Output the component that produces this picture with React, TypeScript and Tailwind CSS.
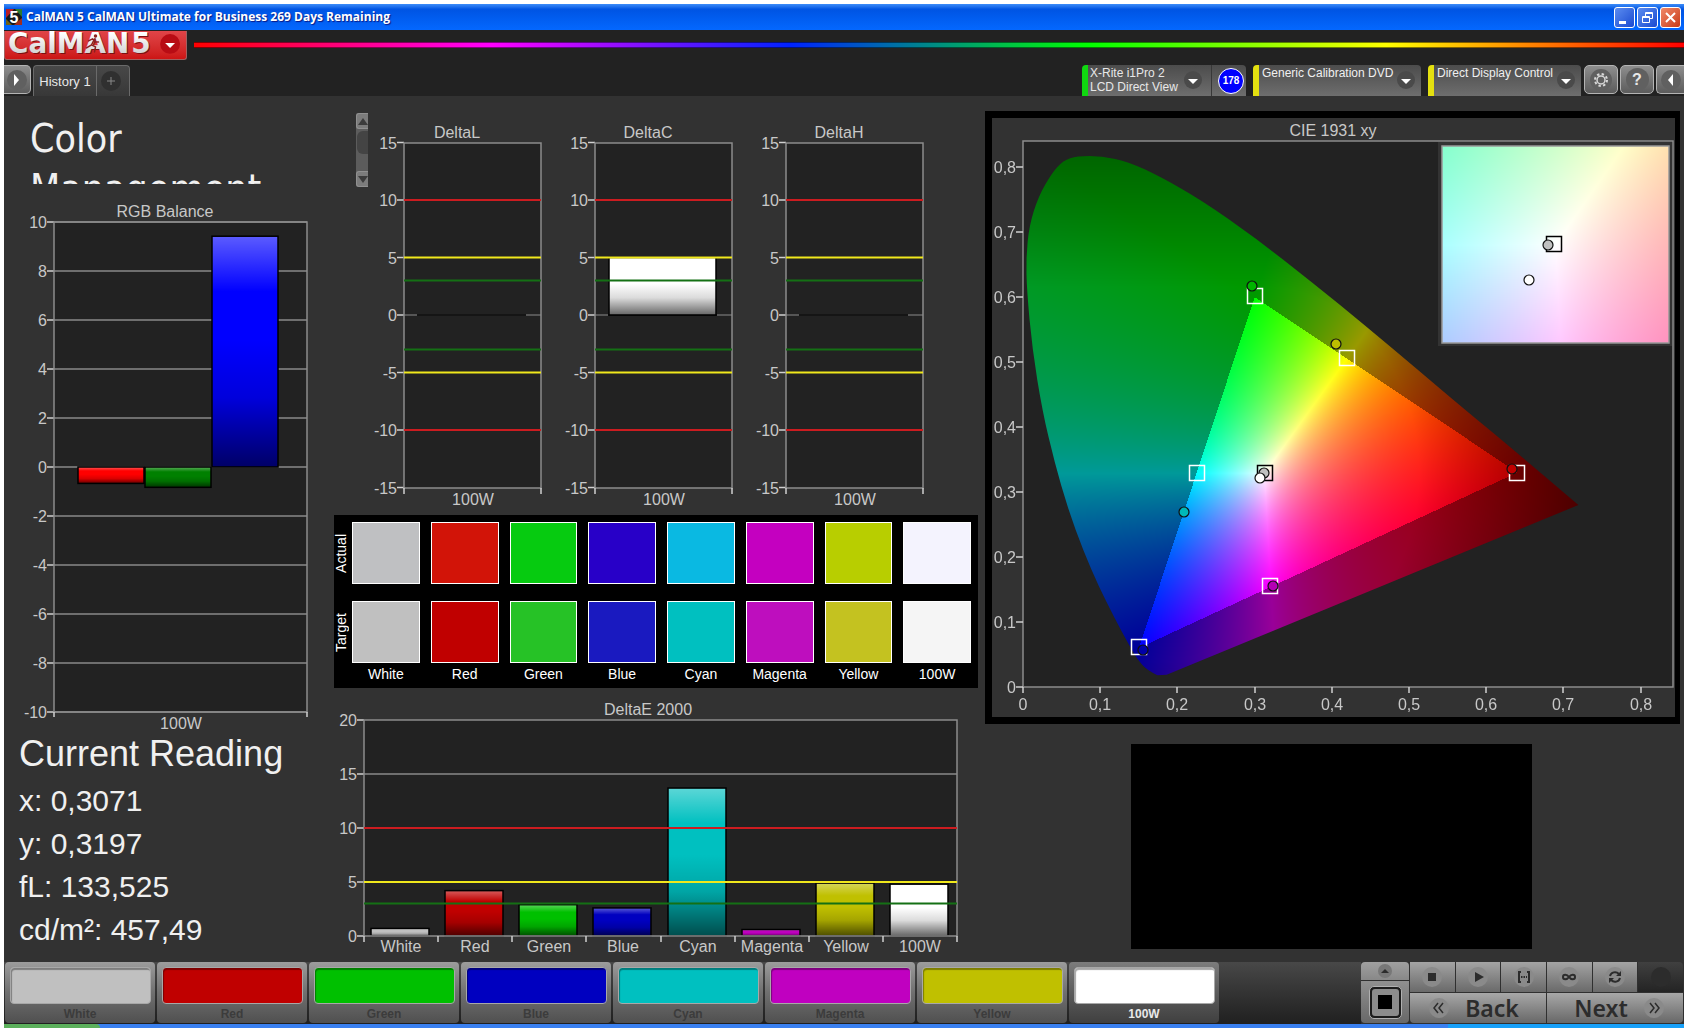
import { useEffect, useRef } from "react";
import type { ReactNode } from "react";

type Bar = { label: string; value: number; color: string };
type Line = { at: number; color: string; width: number };
type Marker = { x: number; y: number; color: string };

const patches = [
  { name: "White", actual: "#bfc0c2", target: "#c0c0c0", button: "#c0c0c0", deltaE: 0.7 },
  { name: "Red", actual: "#d21408", target: "#c00000", button: "#c00000", deltaE: 4.2 },
  { name: "Green", actual: "#06cb10", target: "#26c226", button: "#00c000", deltaE: 2.9 },
  { name: "Blue", actual: "#2800c8", target: "#1a1ac0", button: "#0000c0", deltaE: 2.6 },
  { name: "Cyan", actual: "#0ab9e2", target: "#00c0c0", button: "#00c0c0", deltaE: 13.7 },
  { name: "Magenta", actual: "#c400c0", target: "#be0ebe", button: "#c000c0", deltaE: 0.6 },
  { name: "Yellow", actual: "#b8ce00", target: "#c4c220", button: "#c0c000", deltaE: 4.9 },
  { name: "100W", actual: "#f4f3fe", target: "#f5f5f5", button: "#ffffff", deltaE: 4.8 },
];

const readings = ["x: 0,3071", "y: 0,3197", "fL: 133,525", "cd/m²: 457,49"];

const deltaLimits: Line[] = [
  { at: 10, color: "#cc1c20", width: 2 },
  { at: 5, color: "#f0e81c", width: 2 },
  { at: 3, color: "#147014", width: 2 },
  { at: -3, color: "#147014", width: 2 },
  { at: -5, color: "#f0e81c", width: 2 },
  { at: -10, color: "#cc1c20", width: 2 },
];

const balance = [
  { value: -0.67, color: "#ff0000" },
  { value: -0.83, color: "#008000" },
  { value: 9.42, color: "#0000ff" },
];

const targets: Marker[] = [
  { x: 0.3, y: 0.601, color: "#fff" },
  { x: 0.42, y: 0.506, color: "#fff" },
  { x: 0.64, y: 0.33, color: "#fff" },
  { x: 0.225, y: 0.33, color: "#fff" },
  { x: 0.32, y: 0.155, color: "#fff" },
  { x: 0.15, y: 0.062, color: "#fff" },
  { x: 0.314, y: 0.33, color: "#000" },
];

const measured: Marker[] = [
  { x: 0.297, y: 0.617, color: "#00b400" },
  { x: 0.405, y: 0.528, color: "#bebe00" },
  { x: 0.633, y: 0.335, color: "#c00000" },
  { x: 0.208, y: 0.27, color: "#00b8b8" },
  { x: 0.324, y: 0.155, color: "#b400b4" },
  { x: 0.156, y: 0.057, color: "#0000a8" },
  { x: 0.312, y: 0.33, color: "#c0c0c0" },
  { x: 0.307, y: 0.321, color: "#ffffff" },
];

const locus = [
  [0.174, 0.018], [0.16, 0.026], [0.148, 0.043], [0.137, 0.065], [0.118, 0.107],
  [0.098, 0.155], [0.078, 0.21], [0.058, 0.275], [0.041, 0.345], [0.025, 0.425],
  [0.012, 0.52], [0.005, 0.61], [0.004, 0.66], [0.008, 0.71], [0.02, 0.755],
  [0.037, 0.79], [0.052, 0.81], [0.07, 0.817], [0.102, 0.817], [0.137, 0.808],
  [0.178, 0.785], [0.23, 0.75], [0.301, 0.691], [0.373, 0.624], [0.444, 0.555],
  [0.512, 0.487], [0.575, 0.424], [0.627, 0.373], [0.719, 0.28],
];

// linear sRGB for a chromaticity, scaled so the largest channel is full on
function chromaToRgb(x: number, y: number) {
  const X = x / y;
  const Z = (1 - x - y) / y;
  const rgb = [
    3.2406 * X - 1.5372 - 0.4986 * Z,
    -0.9689 * X + 1.8758 + 0.0415 * Z,
    0.0557 * X - 0.204 + 1.057 * Z,
  ];
  const max = Math.max(...rgb);
  const inside = Math.min(...rgb) >= 0;
  return { rgb: rgb.map((c) => Math.max(0, c / max)), inside };
}

function paintChroma(
  canvas: HTMLCanvasElement,
  range: { x0: number; x1: number; y0: number; y1: number },
  shaded: boolean,
) {
  const ctx = canvas.getContext("2d");
  if (!ctx) return;
  const { width, height } = canvas;
  const image = ctx.createImageData(width, height);
  for (let j = 0; j < height; j++) {
    for (let i = 0; i < width; i++) {
      const x = range.x0 + ((i + 0.5) / width) * (range.x1 - range.x0);
      const y = range.y1 - ((j + 0.5) / height) * (range.y1 - range.y0);
      const { rgb, inside } = chromaToRgb(x, y);
      let level = 255;
      if (shaded) {
        const d = Math.hypot(Math.max(0, x - 0.3127), (y - 0.329) * 0.7);
        level *= Math.min(1, 1 - 2.4 * (d - 0.2));
        if (!inside) level *= 0.6;
      }
      const k = (j * width + i) * 4;
      image.data[k] = rgb[0] * level;
      image.data[k + 1] = rgb[1] * level;
      image.data[k + 2] = rgb[2] * level;
      image.data[k + 3] = 255;
    }
  }
  ctx.putImageData(image, 0, 0);
  if (!shaded) return;

  // keep only what lies inside the spectral locus
  const px = (p: number[]) => [
    ((p[0] - range.x0) / (range.x1 - range.x0)) * width,
    ((range.y1 - p[1]) / (range.y1 - range.y0)) * height,
  ];
  const pts = locus.map(px);
  ctx.globalCompositeOperation = "destination-in";
  ctx.beginPath();
  ctx.moveTo(pts[0][0], pts[0][1]);
  for (let n = 1; n < pts.length - 1; n++) {
    const [cx, cy] = pts[n];
    const [nx, ny] = pts[n + 1];
    ctx.quadraticCurveTo(cx, cy, (cx + nx) / 2, (cy + ny) / 2);
  }
  const last = pts[pts.length - 1];
  ctx.lineTo(last[0], last[1]);
  const [ex, ey] = px([0.186, 0.019]);
  ctx.lineTo(ex, ey);
  ctx.closePath();
  ctx.fill();
}

function Gloss() {
  return (
    <defs>
      <linearGradient id="gloss" x1="0" y1="0" x2="0" y2="1">
        <stop offset="0" stopColor="#fff" stopOpacity="0.36" />
        <stop offset="0.24" stopColor="#fff" stopOpacity="0" />
        <stop offset="0.45" stopColor="#000" stopOpacity="0" />
        <stop offset="0.7" stopColor="#000" stopOpacity="0.14" />
        <stop offset="1" stopColor="#000" stopOpacity="0.6" />
      </linearGradient>
    </defs>
  );
}

function GlossBar({ x, y, w, h, color }: { x: number; y: number; w: number; h: number; color: string }) {
  return (
    <>
      <rect x={x} y={y} width={w} height={h} fill={color} />
      <rect x={x} y={y} width={w} height={h} fill="url(#gloss)" stroke="#000" strokeWidth="1.5" />
    </>
  );
}

function Tick({ x, y, label }: { x: number; y: number; label: string }) {
  return (
    <>
      <path d={`M${x - 7} ${y}H${x}`} stroke="#d0d0d0" strokeWidth="1.5" />
      <text x={x - 7} y={y + 6} textAnchor="end">{label}</text>
    </>
  );
}

const chartText = "block w-full h-auto fill-[#c8c8c8] font-['Liberation_Sans',Arial,sans-serif] text-[16px]";

function RgbBalance() {
  const yOf = (v: number) => 271 - v * 24.5;
  return (
    <svg viewBox="0 0 326 538" className={chartText} role="img" aria-label="RGB Balance">
      <Gloss />
      <text x="161" y="21" textAnchor="middle">RGB Balance</text>
      <rect x="50" y="26" width="253" height="490" fill="#222" />
      {[10, 8, 6, 4, 2, 0, -2, -4, -6, -8, -10].map((v) => (
        <g key={v}>
          <path d={`M50 ${yOf(v)}H303`} stroke="#8a8a8a" strokeWidth="1.5" />
          <Tick x={50} y={yOf(v)} label={String(v)} />
        </g>
      ))}
      {balance.map((b, i) => (
        <GlossBar key={b.color} x={74 + i * 67} y={Math.min(271, yOf(b.value))} w={66} h={Math.abs(b.value) * 24.5} color={b.color} />
      ))}
      <rect x="50" y="26" width="253" height="490" fill="none" stroke="#8c8c8c" strokeWidth="1.5" />
      <path d="M50 516v5M303 516v5" stroke="#d0d0d0" strokeWidth="1.5" />
      <text x="177" y="533" textAnchor="middle">100W</text>
    </svg>
  );
}

function DeltaChart({ title, value }: { title: string; value: number }) {
  const yOf = (v: number) => 202 - v * 11.5;
  return (
    <svg viewBox="0 0 191 397" className={chartText} role="img" aria-label={title}>
      <Gloss />
      <text x="89" y="25" textAnchor="middle">{title}</text>
      <rect x="36" y="30" width="137" height="345" fill="#222" />
      {[15, 10, 5, 0, -5, -10, -15].map((v) => (
        <Tick key={v} x={36} y={yOf(v)} label={String(v)} />
      ))}
      <path d="M36 202H173" stroke="#8a8a8a" />
      <path d="M49 202H158" stroke="#000" strokeWidth="1.5" />
      {value > 0 && <GlossBar x={50} y={yOf(value)} w={107} h={value * 11.5} color="#fff" />}
      <rect x="36" y="30" width="137" height="345" fill="none" stroke="#8c8c8c" strokeWidth="1.5" />
      {deltaLimits.map((l) => (
        <path key={l.at} d={`M36 ${yOf(l.at)}H173`} stroke={l.color} strokeWidth={l.width} />
      ))}
      <path d="M36 375v6M173 375v6" stroke="#d0d0d0" strokeWidth="1.5" />
      <text x="105" y="392" textAnchor="middle">100W</text>
    </svg>
  );
}

function DeltaEChart({ bars }: { bars: Bar[] }) {
  const yOf = (v: number) => 240 - v * 10.8;
  const step = 593 / bars.length;
  return (
    <svg viewBox="0 0 650 262" className={chartText} role="img" aria-label="DeltaE 2000">
      <Gloss />
      <text x="318" y="19" textAnchor="middle">DeltaE 2000</text>
      <rect x="34" y="24" width="593" height="216" fill="#222" />
      <path d={`M34 ${yOf(15)}H627`} stroke="#8a8a8a" strokeWidth="1.5" />
      {[20, 15, 10, 5, 0].map((v) => (
        <Tick key={v} x={34} y={yOf(v)} label={String(v)} />
      ))}
      {bars.map((b, i) => (
        <g key={b.label}>
          <GlossBar x={Math.round(41 + i * step)} y={yOf(b.value)} w={58} h={b.value * 10.8} color={b.color} />
          <text x={Math.round(34 + (i + 0.5) * step)} y="256" textAnchor="middle">{b.label}</text>
        </g>
      ))}
      <rect x="34" y="24" width="593" height="216" fill="none" stroke="#8c8c8c" strokeWidth="1.5" />
      {bars.concat(bars[0]).map((_, i) => (
        <path key={i} d={`M${Math.round(34 + i * step)} 240v6`} stroke="#d0d0d0" strokeWidth="1.5" />
      ))}
      <path d={`M34 ${yOf(10)}H627`} stroke="#cc1c20" strokeWidth="2" />
      <path d={`M34 ${yOf(5)}H627`} stroke="#f0e81c" strokeWidth="2" />
      <path d={`M34 ${yOf(3)}H627`} stroke="#147014" strokeWidth="2" />
    </svg>
  );
}

function CieChart() {
  const main = useRef<HTMLCanvasElement>(null);
  const inset = useRef<HTMLCanvasElement>(null);

  useEffect(() => {
    if (main.current) paintChroma(main.current, { x0: 0, x1: 0.8415, y0: 0, y1: 0.84 }, true);
    if (inset.current) paintChroma(inset.current, { x0: 0.2877, x1: 0.3377, y0: 0.304, y1: 0.354 }, false);
  }, []);

  const xOf = (x: number) => Math.round(31 + x * 772);
  const yOf = (y: number) => Math.round(569 - y * 650);
  const steps = [0, 1, 2, 3, 4, 5, 6, 7, 8];
  const label = (n: number) => (n === 0 ? "0" : `0,${n}`);

  return (
    <svg viewBox="0 0 683 599" className={chartText} role="img" aria-label="CIE 1931 xy">
      <text x="341" y="18" textAnchor="middle">CIE 1931 xy</text>
      <rect x="31" y="23" width="650" height="546" fill="#222" />
      <foreignObject x="31" y="23" width="650" height="546">
        <canvas ref={main} width={650} height={546} className="block" />
      </foreignObject>
      <rect x="31" y="23" width="650" height="546" fill="none" stroke="#8c8c8c" strokeWidth="1.5" />
      {steps.map((n) => (
        <g key={n}>
          <Tick x={31} y={yOf(n / 10)} label={label(n)} />
          <path d={`M${xOf(n / 10)} 569v6`} stroke="#d0d0d0" strokeWidth="1.5" />
          <text x={xOf(n / 10)} y="592" textAnchor="middle">{label(n)}</text>
        </g>
      ))}
      {targets.map((m) => (
        <rect key={m.x} x={xOf(m.x) - 7.5} y={yOf(m.y) - 7.5} width="15" height="15" fill="none" stroke={m.color} strokeWidth="1.5" />
      ))}
      {measured.map((m) => (
        <circle key={m.x} cx={xOf(m.x)} cy={yOf(m.y)} r="5" fill={m.color} stroke="#111" strokeWidth="1.2" />
      ))}

      {/* zoom on the white point */}
      <rect x="446" y="24" width="234" height="204" fill="#333" />
      <foreignObject x="450" y="28" width="227" height="197">
        <canvas ref={inset} width={227} height={197} className="block" />
      </foreignObject>
      <rect x="450" y="28" width="227" height="197" fill="none" stroke="#999" strokeWidth="1.5" />
      <rect x="554.5" y="118.5" width="15" height="15" fill="none" stroke="#000" strokeWidth="1.5" />
      <circle cx="556" cy="127" r="5" fill="#c0c0c0" stroke="#111" strokeWidth="1.2" />
      <circle cx="537" cy="162" r="5" fill="#fff" stroke="#111" strokeWidth="1.2" />
    </svg>
  );
}

function SwatchTable() {
  const rowHead = "[writing-mode:vertical-rl] rotate-180 mx-auto text-[14px] leading-[14px] font-normal";
  return (
    <table className="w-full table-fixed border-collapse bg-black text-white">
      <colgroup>
        <col className="w-[14px]" />
        {patches.map((p) => <col key={p.name} />)}
      </colgroup>
      <tbody>
        <tr>
          <th scope="row" className="p-0 pt-[7px]"><div className={rowHead}>Actual</div></th>
          {patches.map((p) => (
            <td key={p.name} className="p-0 pt-[7px] pl-1 pr-[7px]">
              <div className="h-[62px] border border-white" style={{ backgroundColor: p.actual }} />
            </td>
          ))}
        </tr>
        <tr>
          <th scope="row" className="p-0 pt-[17px]"><div className={rowHead}>Target</div></th>
          {patches.map((p) => (
            <td key={p.name} className="p-0 pt-[17px] pl-1 pr-[7px]">
              <div className="h-[62px] border border-white" style={{ backgroundColor: p.target }} />
            </td>
          ))}
        </tr>
        <tr>
          <td />
          {patches.map((p) => (
            <td key={p.name} className="h-[25px] p-0 pl-1 pr-[7px] pb-1 text-center text-[14px] leading-[16px]">{p.name}</td>
          ))}
        </tr>
      </tbody>
    </table>
  );
}

function RoundDown({ className = "" }: { className?: string }) {
  return (
    <svg viewBox="0 0 20 20" className={`pointer-events-none size-5 shrink-0 ${className}`} aria-hidden="true">
      <circle cx="10" cy="10" r="9" fill="#4a4a4a" />
      <path d="M5 9h10l-5 5z" fill="#fff" />
    </svg>
  );
}

function SourceSelect({ label, option, width }: { label: string; option: string; width: string }) {
  return (
    <div className={`relative flex h-[31px] rounded-t-[4px] border-l-[6px] border-[#e4e010] bg-linear-to-b from-[#4c4c4c] to-[#6e6e6e] ${width}`}>
      <select aria-label={label} className="h-full w-full appearance-none bg-transparent pb-4 pl-[3px] text-[12px] leading-[14px] text-[#f0f0f0] outline-none">
        <option>{option}</option>
      </select>
      <RoundDown className="absolute right-[5px] top-[5px]" />
    </div>
  );
}

const toolButton =
  "flex h-[29px] items-center justify-center rounded-[5px] border border-[#b4b4b4] bg-linear-to-b from-[#8e8e8e] to-[#5c5c5c]";

function TitleBar() {
  const box = "flex size-[21px] items-center justify-center rounded-[3px] border border-white";
  return (
    <header className="flex h-[26px] items-center gap-1 bg-linear-to-b from-[#3c8cf8] via-[#0054e3] via-20% to-[#0468ff] pl-[2px] pr-[3px]">
      <svg viewBox="0 0 16 16" className="size-4" aria-hidden="true">
        <rect width="16" height="16" fill="#181818" />
        <path d="M0 0h8L0 9z" fill="#b81c24" />
        <path d="M9 0h7v8z" fill="#2c7a30" />
        <path d="M16 9v7H8z" fill="#a02c20" />
        <path d="M0 10v6h6z" fill="#706018" />
        <text x="8" y="14" textAnchor="middle" className="fill-white font-['Liberation_Sans',Arial,sans-serif] text-[16px] font-bold">5</text>
      </svg>
      <h1 className="grow font-['Open_Sans','Noto_Sans',sans-serif] text-[12px] font-bold text-white [text-shadow:1px_1px_1px_#0a1883]">
        CalMAN 5 CalMAN Ultimate for Business 269 Days Remaining
      </h1>
      <div className="flex gap-[2px]">
        <button aria-label="Minimize" className={`${box} bg-linear-to-br from-[#5c8cf0] to-[#1c48d0]`}>
          <svg viewBox="0 0 19 19" className="size-[19px]"><path d="M4 13h7v3H4z" fill="#fff" /></svg>
        </button>
        <button aria-label="Restore" className={`${box} bg-linear-to-br from-[#5c8cf0] to-[#1c48d0]`}>
          <svg viewBox="0 0 19 19" className="size-[19px]" fill="none" stroke="#fff">
            <path d="M4.500 8.500h7v6h-7zM4 9.500h8M7.500 8V4.500h7v6H12M7 5.500h8" />
          </svg>
        </button>
        <button aria-label="Close" className={`${box} bg-linear-to-br from-[#f08868] to-[#c83810]`}>
          <svg viewBox="0 0 19 19" className="size-[19px]"><path d="M5 5l9 9M14 5l-9 9" stroke="#fff" strokeWidth="2" /></svg>
        </button>
      </div>
    </header>
  );
}

function Logo() {
  return (
    <button aria-label="CalMAN 5 menu" className="flex h-[29px] w-[183px] items-center rounded-b-[3px] border border-t-0 border-[#a06060] bg-linear-to-b from-[#e04448] to-[#cc1414]">
      <svg viewBox="0 0 182 28" className="w-full" aria-hidden="true">
        <defs>
          <linearGradient id="silver" x1="0" y1="0" x2="0" y2="1">
            <stop offset="0.2" stopColor="#fff" />
            <stop offset="1" stopColor="#c4c4c4" />
          </linearGradient>
        </defs>
        <g className="font-['DejaVu_Sans',Verdana,sans-serif] text-[28px] font-bold">
          <g fill="#7c1010">
            <text x="4" y="23">CalMAN</text>
            <text x="128" y="23">5</text>
          </g>
          <g fill="url(#silver)">
            <text x="3" y="22">CalMAN</text>
            <text x="127" y="22">5</text>
          </g>
        </g>
        <g stroke="#8c2020" strokeWidth="1.5" fill="none" strokeLinecap="round">
          <circle cx="91" cy="5" r="1" fill="#8c2020" />
          <path d="M90 8l-3 6 4 2-1 5M87 14l-5 3M84 10l4-2 3 3h3" />
        </g>
        <circle cx="166" cy="13" r="10" fill="#b80c14" />
        <path d="M161 12h10l-5 5z" fill="#fff" />
      </svg>
    </button>
  );
}

function ToolBar() {
  return (
    <div className="flex h-[31px] items-start justify-between text-[#e8e8e8]">
      <div className="flex">
        <button aria-label="Expand panel" className={`${toolButton} w-[27px] rounded-l-none border-l-0`}>
          <svg viewBox="0 0 22 22" className="size-[22px]"><circle cx="11" cy="11" r="10" fill="#606060" /><path d="M8 5v12l5-6z" fill="#fff" /></svg>
        </button>
        <div className="ml-[2px] flex h-[31px] rounded-t-[4px] border border-b-0 border-[#6a6a6a] bg-linear-to-b from-[#484848] to-[#383838]">
          <button className="w-[62px] pt-[2px] text-[13px]">History 1</button>
          <button aria-label="Add history" className="flex w-[33px] items-center justify-center border-l border-[#6a6a6a] pr-1">
            <svg viewBox="0 0 20 20" className="size-5"><circle cx="10" cy="10" r="10" fill="#303030" /><path d="M6 10h8M10 6v8" stroke="#888" /></svg>
          </button>
        </div>
      </div>
      <div className="flex">
        <div className="flex h-[31px] w-[164px] rounded-t-[4px] border-l-[6px] border-[#10d810] bg-linear-to-b from-[#4c4c4c] to-[#6e6e6e]">
          <button className="flex w-[124px] items-center justify-between border-r border-[#383838] pb-[2px] pl-[2px] pr-2 text-left text-[12px] leading-[14px]">
            <span>X-Rite i1Pro 2<br />LCD Direct View</span>
            <RoundDown />
          </button>
          <div className="flex grow items-center justify-end pr-[2px]">
            <span className="flex size-[26px] items-center justify-center rounded-full border border-white bg-[#0000ff] text-[10px] font-bold text-white">178</span>
          </div>
        </div>
        <div className="ml-[7px] flex gap-[7px]">
          <SourceSelect label="Source" option="Generic Calibration DVD" width="w-[168px]" />
          <SourceSelect label="Display" option="Direct Display Control" width="w-[153px]" />
        </div>
        <div className="ml-[3px] flex gap-[2px]">
          <button aria-label="Settings" className={`${toolButton} w-[34px]`}>
            <svg viewBox="0 0 24 24" className="size-6" fill="none" stroke="#d8d8d8">
              <circle cx="12" cy="12" r="11" fill="#606060" stroke="none" />
              <circle cx="12" cy="12" r="4" strokeWidth="1.5" />
              <circle cx="12" cy="12" r="6" strokeWidth="2" strokeDasharray="2.4 2.3" />
            </svg>
          </button>
          <button aria-label="Help" className={`${toolButton} w-[34px]`}>
            <span className="flex size-[23px] items-center justify-center rounded-full bg-[#606060] text-[16px] font-bold">?</span>
          </button>
          <button aria-label="Collapse panel" className={`${toolButton} w-[28px] rounded-r-none border-r-0`}>
            <svg viewBox="0 0 22 22" className="size-[22px]"><circle cx="11" cy="11" r="10" fill="#606060" /><path d="M13 5v12l-5-6z" fill="#fff" /></svg>
          </button>
        </div>
      </div>
    </div>
  );
}

function MediaButton({ label, children }: { label: string; children: ReactNode }) {
  return (
    <button aria-label={label} className="flex h-[30px] items-center justify-center bg-linear-to-b from-[#a4a4a4] to-[#6a6a6a]">
      <svg viewBox="0 0 20 20" className="size-5" fill="none" stroke="#2c2c2c">
        <circle cx="10" cy="10" r="10" fill="#8a8a8a" stroke="none" />
        {children}
      </svg>
    </button>
  );
}

function BottomBar() {
  return (
    <footer className="flex h-[62px] justify-between bg-linear-to-b from-[#484848] to-[#202020]">
      <div className="flex gap-[2px] pl-px">
        {patches.map((p) => (
          <button key={p.name} className="flex h-[61px] w-[150px] flex-col items-center rounded-[4px] bg-linear-to-b from-[#9c9c9c] via-[#707070] to-[#505050] pt-[5px] last:from-[#7c7c7c] last:via-[#5c5c5c] last:to-[#404040]">
            <span className="h-[37px] w-[141px] rounded-[4px] border border-[#a8a8a8] shadow-[inset_1px_2px_1px_rgba(0,0,0,0.35)]" style={{ backgroundColor: p.button }} />
            <span className={`mt-[3px] text-[12px] leading-[14px] font-bold ${p.name === "100W" ? "text-[#e8e8e8]" : "text-[#3c3c3c]"}`}>{p.name}</span>
          </button>
        ))}
      </div>
      <div className="flex gap-px bg-[#303030] pr-px">
        <div className="flex w-[48px] flex-col gap-px">
          <button aria-label="Show patterns" className="flex h-[18px] items-center justify-center rounded-t-[4px] bg-linear-to-b from-[#a0a0a0] to-[#888]">
            <svg viewBox="0 0 16 16" className="size-4"><circle cx="8" cy="8" r="7" fill="#777" /><path d="M4 10h8L8 6z" fill="#2c2c2c" /></svg>
          </button>
          <button aria-label="Test pattern" className="flex h-[42px] items-center justify-center rounded-b-[4px] bg-linear-to-b from-[#909090] to-[#686868]">
            <span className="flex size-[33px] items-center justify-center rounded-[5px] border border-[#b0b0b0] bg-[#1c1c1c]">
              <span className="flex size-[27px] items-center justify-center rounded-[3px] bg-[#8c8c8c]">
                <span className="size-[14px] bg-black" />
              </span>
            </span>
          </button>
        </div>
        <div className="flex w-[273px] flex-col gap-px">
          <div className="grid grid-cols-6 gap-px">
            <MediaButton label="Stop"><path d="M6 6h8v8H6z" fill="#2c2c2c" stroke="none" /></MediaButton>
            <MediaButton label="Play"><path d="M7 5v10l9-5z" fill="#2c2c2c" stroke="none" /></MediaButton>
            <MediaButton label="Read series"><path d="M7 5H5v10h2M13 5h2v10h-2" strokeWidth="2" /><path d="M7 10h6" strokeWidth="2" strokeDasharray="1.500 1" /></MediaButton>
            <MediaButton label="Read continuous">
              <path d="M10 10c-2-3-6-3-6 0s4 3 6 0c2-3 6-3 6 0s-4 3-6 0z" strokeWidth="2" />
            </MediaButton>
            <MediaButton label="Refresh">
              <path d="M5 9c1-4 6-5 9-2M15 11c-1 4-6 5-9 2" strokeWidth="2" />
              <path d="M16 4v5h-5zM4 16v-5h5z" fill="#2c2c2c" stroke="none" />
            </MediaButton>
            <button aria-label="Status" className="flex h-[30px] items-center justify-center rounded-tr-[4px] bg-linear-to-b from-[#404040] to-[#242424]">
              <span className="size-5 rounded-full bg-[#2c2c2c]" />
            </button>
          </div>
          <div className="grid grid-cols-2 gap-px font-['Noto_Sans',sans-serif] text-[23px] leading-[30px] font-semibold text-[#2c2c2c]">
            <button className="flex h-[30px] items-center justify-center gap-4 rounded-bl-[4px] bg-linear-to-b from-[#a8a8a8] to-[#686868] pr-2">
              <svg viewBox="0 0 20 20" className="size-5" fill="none" stroke="#2c2c2c" strokeWidth="1.5">
                <circle cx="10" cy="10" r="10" fill="#8a8a8a" stroke="none" />
                <path d="M9 5l-4 5 4 5M14 5l-4 5 4 5" />
              </svg>
              Back
            </button>
            <button className="flex h-[30px] items-center justify-center gap-4 rounded-br-[4px] bg-linear-to-b from-[#a8a8a8] to-[#686868] pl-2">
              Next
              <svg viewBox="0 0 20 20" className="size-5" fill="none" stroke="#2c2c2c" strokeWidth="1.5">
                <circle cx="10" cy="10" r="10" fill="#8a8a8a" stroke="none" />
                <path d="M6 5l4 5-4 5M11 5l4 5-4 5" />
              </svg>
            </button>
          </div>
        </div>
      </div>
    </footer>
  );
}

export default function App() {
  return (
    <div className="min-h-screen bg-white px-1 pt-1 font-['Liberation_Sans',Arial,sans-serif]">
      <TitleBar />

      {/* LOGO AND TABS */}
      <div className="bg-[#222] pt-px">
        <div className="flex items-start gap-[7px] pb-[5px]">
          <Logo />
          <div className="mt-[11px] h-[6px] grow border-y border-black/50 bg-[linear-gradient(to_right,#f00,#f0f_20%,#02f_40%,#0f0_60%,#ff0_80%,#f00)]" />
        </div>
        <ToolBar />
      </div>

      {/* WORKSPACE */}
      <main className="grid grid-cols-[326fr_650fr_704fr] bg-[#323232] pb-1 text-[#f0f0f0]">
        <section>
          <div className="h-[88px] overflow-hidden pt-[18px] pl-[26px]">
            <h2 className="w-[300px] font-['DejaVu_Sans_Condensed','DejaVu_Sans',sans-serif] text-[39px] leading-[50px]">Color Management</h2>
          </div>
          <div className="mt-3"><RgbBalance /></div>
          <div className="pl-[15px]">
            <h3 className="text-[36px] leading-[40px]">Current Reading</h3>
            <ul className="mt-[5px] text-[30px] leading-[43px]">
              {readings.map((r) => <li key={r}>{r}</li>)}
            </ul>
          </div>
        </section>

        <section className="pt-[17px]">
          <div className="flex items-start pl-[26px] pr-[39px]">
            <div className="flex h-[74px] w-3 shrink-0 flex-col justify-between rounded-l-[3px] bg-[#5c5c5c]">
              <button aria-label="Scroll up" className="flex h-4 w-3 items-center justify-center rounded-l-[3px] border border-r-0 border-[#909090] bg-[#7c7c7c]">
                <svg viewBox="0 0 10 7" className="w-[10px]"><path d="M0 7h10L5 0z" fill="#3c3c3c" /></svg>
              </button>
              <div className="-mt-4 ml-px h-[23px] rounded-l-[6px] bg-[#444]" />
              <button aria-label="Scroll down" className="flex h-4 w-3 items-center justify-center rounded-l-[3px] border border-r-0 border-[#909090] bg-[#7c7c7c]">
                <svg viewBox="0 0 10 7" className="w-[10px]"><path d="M0 0h10L5 7z" fill="#3c3c3c" /></svg>
              </button>
            </div>
            <div className="grid grow grid-cols-3">
              <DeltaChart title="DeltaL" value={0} />
              <DeltaChart title="DeltaC" value={5} />
              <DeltaChart title="DeltaH" value={0} />
            </div>
          </div>
          <div className="mt-[5px] mb-2 pl-1 pr-[2px]"><SwatchTable /></div>
          <DeltaEChart bars={patches.map((p) => ({ label: p.name, value: p.deltaE, color: p.button }))} />
        </section>

        <section className="pt-[15px] pl-[5px] pr-1">
          <div className="border-[7px] border-r-[5px] border-black"><CieChart /></div>
          <div className="pr-[3px]">
            <div className="mx-auto mt-5 h-[205px] w-[401px] bg-black" />
          </div>
        </section>
      </main>

      <BottomBar />

      {/* TASKBAR EDGE */}
      <div className="flex h-1 bg-[#3a80f0]">
        <div className="w-[96px] rounded-tr-[4px] bg-[#5cb05c]" />
        <div className="ml-auto w-[236px] bg-[#18a0f8]" />
      </div>
    </div>
  );
}
